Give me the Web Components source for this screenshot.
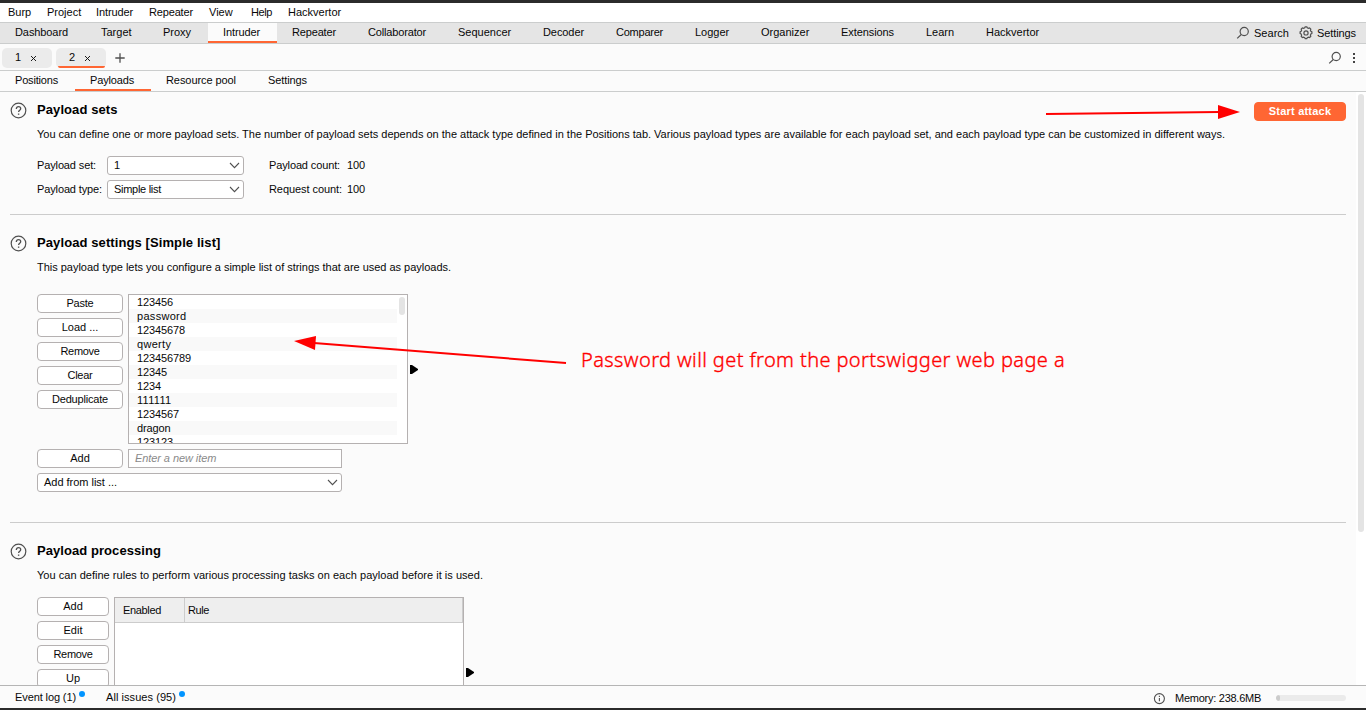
<!DOCTYPE html>
<html lang="en">
<head>
<meta charset="utf-8">
<title>Burp Suite - Intruder</title>
<style>
html, body { margin: 0; height: 100%; overflow: hidden; }
body { font: 11px/14px "Liberation Sans", Arial, sans-serif; color: #080808; background: #fbfbfb; }
</style>
</head>
<body>
<burp-app></burp-app>
<script>
function define(name, html, setup) {
  const t = document.createElement('template');
  t.innerHTML = html;
  customElements.define(name, class extends HTMLElement {
    constructor() {
      super();
      this.attachShadow({ mode: 'open' }).appendChild(t.content.cloneNode(true));
    }
    connectedCallback() {
      const w = this.getAttribute('w');
      if (w) this.style.width = w + 'px';
      if (setup) setup(this, this.shadowRoot);
    }
  });
}

const icons = {
  help: [17, 17, '<circle cx="8.5" cy="8.5" r="7.3"/><path d="M6.3 6.9C6.3 5.5 7.2 4.7 8.5 4.7s2.2.8 2.2 2c0 1.6-2.1 1.7-2.1 3.4" stroke-width="1.3"/><path d="M8.6 11.5v1.3" stroke-width="1.4"/>'],
  search: [14, 14, '<circle cx="8.2" cy="5.5" r="4.1"/><path d="M5.3 8.5 1.2 12.4"/>'],
  gear: [14, 14, '<path d="M5.7 1.8 6.2.8h1.6l.5 1 1.2.5 1.1-.4 1.2 1.2-.4 1.1.5 1.2 1 .5v1.6l-1 .5-.5 1.2.4 1.1-1.2 1.2-1.1-.4-1.2.5-.5 1H6.2l-.5-1-1.2-.5-1.1.4-1.2-1.2.4-1.1-.5-1.2-1-.5V5.9l1-.5.5-1.2-.4-1.1 1.2-1.2 1.1.4z"/><circle cx="7" cy="6.9" r="2.1"/>'],
  info: [12, 12, '<circle cx="6.4" cy="5.6" r="5" stroke-width="1.1"/><path d="M6.4 4.9v3.4M6.4 2.8v1.1" stroke-width="1.1"/>'],
  plus: [10, 10, '<path d="M5 .3v9.4M.3 5h9.4" stroke-width="1.3"/>'],
  close: [7, 7, '<path d="M1 1l5 5M6 1 1 6" stroke="#111" stroke-width=".95"/>'],
  dots: [4, 12, '<path d="M1 1h2v2H1zM1 5h2v2H1zM1 9h2v2H1z" fill="#444" stroke="none"/>'],
  chevron: [11, 7, '<path d="M1 1l4.5 4.6L10 1" stroke-width="1.1"/>'],
  expand: [8, 9, '<path d="M0 0h2l6 4v1L2 9H0z" fill="#000" stroke="none"/>']
};
define('ui-icon', '<style>:host{display:block;flex:none}svg{display:block;fill:none;stroke:#505050;stroke-width:1.2}</style><span></span>', (el, root) => {
  const [w, h, body] = icons[el.getAttribute('name')];
  root.querySelector('span').innerHTML = `<svg width="${w}" height="${h}" viewBox="0 0 ${w} ${h}">${body}</svg>`;
});

/* Text run whose tracking is adjusted to a given advance width. */
define('fit-text', '<style>:host{display:inline-block;white-space:nowrap}</style><slot></slot>', el => {
  const target = +el.getAttribute('fit');
  requestAnimationFrame(() => {
    el.style.letterSpacing = (target - el.getBoundingClientRect().width) / el.textContent.length + 'px';
  });
});

define('menu-item', '<style>:host{display:block;box-sizing:border-box;flex:none;white-space:nowrap}</style><slot></slot>');
define('tool-tab', `<style>
:host{display:block;box-sizing:border-box;flex:none;height:20px;padding:2px 0 0 15px;white-space:nowrap}
:host([selected]){background:var(--tab-bg,#fbfbfb);border-bottom:2px solid #ff6633}
</style><slot></slot>`);
define('attack-tab', `<style>
:host{display:flex;box-sizing:border-box;width:50px;height:20px;background:#ebebeb;border-radius:5px;padding:2px 0 0 13px;gap:9px;position:relative}
ui-icon{padding-top:5px}
:host([selected])::after{content:"";position:absolute;left:2px;right:1px;bottom:0;height:2px;background:#ff6633;border-radius:0 0 2px 2px}
</style><slot></slot><ui-icon name="close"></ui-icon>`);

define('ui-button', `<style>
:host{display:block;box-sizing:border-box;height:19px;line-height:16px;border:1px solid #b5b1b1;border-radius:4px;background:#fff;text-align:center;white-space:nowrap}
:host([primary]){background:#ff6633;border-color:#ff6633;color:#fff;font-weight:bold;line-height:17px}
</style><slot></slot>`);
define('ui-select', `<style>
:host{display:flex;box-sizing:border-box;height:19px;line-height:17px;border:1px solid #b5b1b1;border-radius:3px;background:#fff;justify-content:space-between;align-items:center;padding:0 3px 0 6px;white-space:nowrap}
</style><slot></slot><ui-icon name="chevron"></ui-icon>`);
define('ui-input', `<style>
:host{display:block;box-sizing:border-box;height:19px;line-height:17px;border:1px solid #b5b1b1;background:#fff;padding:0 6px;color:#8a8a8a;font-style:italic;letter-spacing:-.08px}
</style><slot></slot>`);

define('payload-list', `<style>
:host{display:block;box-sizing:border-box;height:150px;border:1px solid #b5b1b1;background:#fff;overflow:hidden;position:relative}
::slotted(div){height:14px;padding-left:8px;margin-right:10px;letter-spacing:-.12px}
::slotted(div:nth-child(even)){background:#f9f9f9}
::slotted(.word){letter-spacing:.3px}
i{position:absolute;right:2px;top:2px;width:6px;height:18px;border-radius:3px;background:#e4e4e4}
</style><slot></slot><i></i>`);

define('rule-table', `<style>
:host{display:block;box-sizing:border-box;height:150px;border:1px solid #b5b1b1;background:#fff}
.h{display:flex;box-sizing:border-box;height:25px;line-height:25px;background:#eee;border-bottom:1px solid #ccc}
.h div{box-sizing:border-box;border-right:1px solid #ccc}
.a{width:70px;padding-left:8px}.b{flex:1;padding-left:3px}
</style><div class="h"><div class="a"><fit-text fit="38">Enabled</fit-text></div><div class="b"><fit-text fit="21">Rule</fit-text></div></div>`);

define('config-section', `<style>
:host{display:flex;box-sizing:border-box;margin:0 10px;gap:10px;border-bottom:1px solid #ccc}
:host([last]){border:0}
ui-icon{padding-top:10px}
.m{flex:1;min-width:0}
h2{margin:0;font:bold 13px/16px "Liberation Sans",Arial,sans-serif;color:#000;height:15px;padding-top:10px}
p{margin:0;padding-top:10px;height:14px;white-space:nowrap}
.top{display:flex;justify-content:space-between}
</style><ui-icon name="help"></ui-icon><div class="m"><div class="top"><h2><slot name="title"></slot></h2><slot name="action"></slot></div><p><slot name="desc"></slot></p><slot></slot></div>`);

define('status-item', `<style>
:host{display:flex;gap:3px}i{width:6px;height:6px;border-radius:50%;background:#0094ff;margin-top:1px}
</style><slot></slot><i></i>`);

define('note-arrow', `<style>:host{position:absolute;display:block;pointer-events:none}svg{display:block;fill:red;stroke:red;stroke-width:2}</style><svg><line/><polygon stroke="none"/></svg>`, (el, root) => {
  const svg = root.querySelector('svg');
  svg.setAttribute('width', el.getAttribute('w'));
  svg.setAttribute('height', el.getAttribute('h'));
  const [x1, y1, x2, y2] = el.getAttribute('line').split(' ');
  const l = root.querySelector('line');
  Object.entries({ x1, y1, x2, y2 }).forEach(([k, v]) => l.setAttribute(k, v));
  root.querySelector('polygon').setAttribute('points', el.getAttribute('head'));
});

define('burp-app', `<style>
:host{display:flex;flex-direction:column;box-sizing:border-box;width:1366px;height:710px;border-top:3px solid #2b2b2b;border-bottom:2px solid #2b2b2b;position:relative;overflow:hidden}
nav{display:flex;box-sizing:border-box;flex:none}
.menu{height:20px;background:#fff;border-bottom:1px solid #cbcdcd;padding:2px 0 0 8px}
.tools{height:21px;background:#e5e5e5;border-bottom:1px solid #cbcdcd}
.attacks{height:27px;border-bottom:1px solid #cbcdcd;padding:4px 0 0 2px;gap:4px}
.subs{height:21px;border-bottom:1px solid #cbcdcd}
.right{margin-left:auto;display:flex}
.tools .right{padding:3px 10px 0 0}
.tools .right ui-icon{margin-right:4px}
.tools .right .s{margin-right:10px}
.attacks .plus{padding:5px 0 0 5px}
.attacks .right{padding:3px 10px 0 0;gap:10px}
.dots{padding-top:1px}
main{display:flex;flex:1;min-height:0;overflow:hidden}
.page{flex:1;min-width:0;overflow:hidden}
.bar{width:10px;box-sizing:border-box;background:#fff;padding:2px 2px}
.bar i{display:block;width:6px;height:438px;border-radius:3px;background:#e4e4e4}
.form{display:grid;grid-template-columns:70px 137px 25px 78px auto;row-gap:5px;padding-top:15px;line-height:19px;justify-content:start}
.form .c{grid-column:4}
.row{display:flex;gap:5px}
.col{display:flex;flex-direction:column;gap:5px}
.ex{padding-top:71px;margin-left:-3px}
footer{display:flex;box-sizing:border-box;flex:none;height:23px;border-top:1px solid #b5b5b5;background:#fbfbfb;padding:4px 20px 0 15px;gap:21px}
footer .right{gap:10px}
footer .right ui-icon{padding-top:3px}
.mem{margin:1px 5px 0 0}
.meter{width:70px;height:6px;border-radius:3px;background:#ebebeb;margin-top:5px;overflow:hidden}
.meter i{display:block;width:4px;height:6px;border-radius:2px;background:#ccc}
.note{position:absolute;left:581px;top:343px;font:300 20px/28px "Noto Sans","Open Sans",sans-serif;color:red;-webkit-text-stroke:.35px red}
</style>
<nav class="menu"><menu-item w="39">Burp</menu-item><menu-item w="49">Project</menu-item><menu-item w="53"><fit-text fit="37">Intruder</fit-text></menu-item><menu-item w="60"><fit-text fit="44">Repeater</fit-text></menu-item><menu-item w="42">View</menu-item><menu-item w="37"><fit-text fit="21">Help</fit-text></menu-item><menu-item>Hackvertor</menu-item></nav>
<nav class="tools"><tool-tab w="86"><fit-text fit="53">Dashboard</fit-text></tool-tab><tool-tab w="62">Target</tool-tab><tool-tab w="60">Proxy</tool-tab><tool-tab w="69" selected><fit-text fit="37">Intruder</fit-text></tool-tab><tool-tab w="76"><fit-text fit="44">Repeater</fit-text></tool-tab><tool-tab w="90"><fit-text fit="58">Collaborator</fit-text></tool-tab><tool-tab w="85">Sequencer</tool-tab><tool-tab w="73"><fit-text fit="41">Decoder</fit-text></tool-tab><tool-tab w="79"><fit-text fit="47">Comparer</fit-text></tool-tab><tool-tab w="66">Logger</tool-tab><tool-tab w="80">Organizer</tool-tab><tool-tab w="85"><fit-text fit="53">Extensions</fit-text></tool-tab><tool-tab w="60">Learn</tool-tab><tool-tab w="70">Hackvertor</tool-tab>
<div class="right"><ui-icon name="search"></ui-icon><fit-text class="s" fit="35">Search</fit-text><ui-icon name="gear"></ui-icon><fit-text fit="39">Settings</fit-text></div></nav>
<nav class="attacks"><attack-tab>1</attack-tab><attack-tab selected>2</attack-tab><ui-icon class="plus" name="plus"></ui-icon><div class="right"><ui-icon name="search"></ui-icon><ui-icon class="dots" name="dots"></ui-icon></div></nav>
<nav class="subs"><tool-tab w="75"><fit-text fit="43">Positions</fit-text></tool-tab><tool-tab w="76" selected><fit-text fit="44">Payloads</fit-text></tool-tab><tool-tab w="102"><fit-text fit="70">Resource pool</fit-text></tool-tab><tool-tab w="60"><fit-text fit="39">Settings</fit-text></tool-tab></nav>
<main><div class="page">
<config-section style="height:123px"><fit-text fit="80.5" slot="title">Payload sets</fit-text><ui-button slot="action" primary style="width:92px;margin-top:10px;margin-bottom:-10px"><fit-text fit="62.5">Start attack</fit-text></ui-button><fit-text fit="1188" slot="desc">You can define one or more payload sets. The number of payload sets depends on the attack type defined in the Positions tab. Various payload types are available for each payload set, and each payload type can be customized in different ways.</fit-text>
<div class="form"><span><fit-text fit="59">Payload set:</fit-text></span><ui-select>1</ui-select><span class="c"><fit-text fit="71">Payload count:</fit-text></span><fit-text fit="18">100</fit-text><span><fit-text fit="65">Payload type:</fit-text></span><ui-select><fit-text fit="47">Simple list</fit-text></ui-select><span class="c"><fit-text fit="73">Request count:</fit-text></span><fit-text fit="18">100</fit-text></div></config-section>
<config-section style="height:308px;padding-top:10px"><fit-text fit="183.5" slot="title">Payload settings [Simple list]</fit-text><fit-text fit="414" slot="desc">This payload type lets you configure a simple list of strings that are used as payloads.</fit-text>
<div class="col" style="padding-top:20px">
<div class="row"><div class="col" style="width:86px"><ui-button><fit-text fit="27">Paste</fit-text></ui-button><ui-button>Load ...</ui-button><ui-button><fit-text fit="39">Remove</fit-text></ui-button><ui-button><fit-text fit="25">Clear</fit-text></ui-button><ui-button><fit-text fit="56">Deduplicate</fit-text></ui-button></div>
<payload-list w="280"><div>123456</div><div class="word">password</div><div>12345678</div><div class="word">qwerty</div><div>123456789</div><div>12345</div><div>1234</div><div class="word">111111</div><div>1234567</div><div>dragon</div><div>123123</div></payload-list><ui-icon class="ex" name="expand"></ui-icon></div>
<div class="row"><ui-button w="86">Add</ui-button><ui-input w="214">Enter a new item</ui-input></div>
<ui-select w="305"><fit-text fit="73">Add from list ...</fit-text></ui-select></div></config-section>
<config-section last style="padding-top:10px"><fit-text fit="124" slot="title">Payload processing</fit-text><fit-text fit="446" slot="desc">You can define rules to perform various processing tasks on each payload before it is used.</fit-text>
<div class="row" style="padding-top:15px"><div class="col" style="width:72px"><ui-button>Add</ui-button><ui-button>Edit</ui-button><ui-button><fit-text fit="39">Remove</fit-text></ui-button><ui-button>Up</ui-button></div><rule-table w="350"></rule-table><ui-icon class="ex" name="expand"></ui-icon></div></config-section>
</div><div class="bar"><i></i></div></main>
<footer><status-item><fit-text fit="61">Event log (1)</fit-text></status-item><status-item><fit-text fit="70">All issues (95)</fit-text></status-item><div class="right"><ui-icon name="info"></ui-icon><fit-text class="mem" fit="86">Memory: 238.6MB</fit-text><div class="meter"><i></i></div></div></footer>
<note-arrow w="200" h="20" style="left:1044px;top:96px" line="2 15 175 13" head="174,6 196,13 174,20"></note-arrow>
<note-arrow w="280" h="40" style="left:290px;top:327px" line="276 33 24 13" head="4,11 26,6 25,20"></note-arrow>
<fit-text class="note" fit="484">Password will get from the portswigger web page a</fit-text>`);
</script>
</body>
</html>
